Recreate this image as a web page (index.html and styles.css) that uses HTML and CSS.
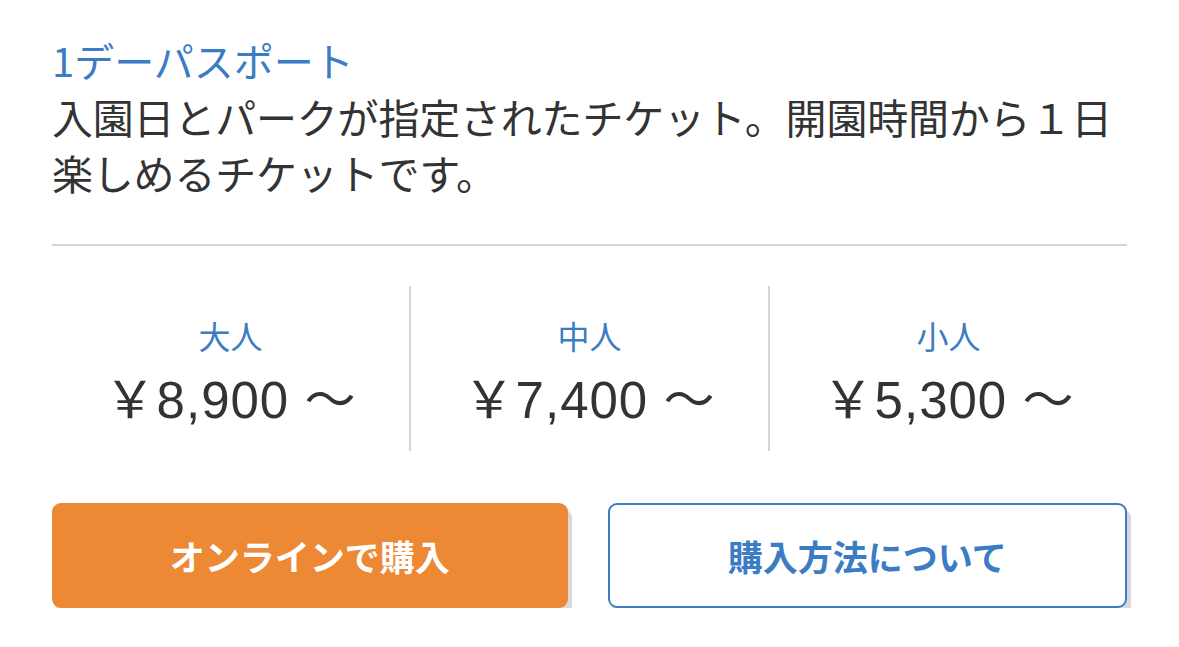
FILE: index.html
```html
<!DOCTYPE html>
<html lang="ja">
<head>
  <meta charset="UTF-8">
  <title>1デーパスポート</title>
  <link rel="stylesheet" href="styles.css">
</head>
<body>
  <div class="ticket">
    <h2 class="ticket-name">1デーパスポート</h2>
    <p class="ticket-desc">入園日とパークが指定されたチケット。開園時間から１日<br>楽しめるチケットです。</p>

    <div class="prices">
      <div class="price-col">
        <div class="age">大人</div>
        <div class="amount">￥8,900 ～</div>
      </div>
      <div class="price-col">
        <div class="age">中人</div>
        <div class="amount">￥7,400 ～</div>
      </div>
      <div class="price-col">
        <div class="age">小人</div>
        <div class="amount">￥5,300 ～</div>
      </div>
    </div>

    <div class="buttons">
      <a href="#" class="btn btn-buy">オンラインで購入</a>
      <a href="#" class="btn btn-info">購入方法について</a>
    </div>
  </div>
</body>
</html>
```

FILE: styles.css
```css
body {
  margin: 0;
  background: #fff;
  font-family: "Noto Sans CJK JP", "Noto Sans", sans-serif;
  color: #333;
}
.ticket {
  padding: 34px 52px 0 52px;
}
.ticket-name {
  margin: 0;
  font-size: 40px;
  font-weight: normal;
  color: #3b7cc4;
  line-height: 52px;
}
.ticket-desc {
  margin: 2px -52px 0 0;
  font-size: 41px;
  letter-spacing: -0.2px;
  line-height: 56px;
}
.prices {
  display: flex;
  border-top: 2px solid #d4d4d4;
  margin-top: 44px;
  padding: 40px 0 52px 0;
}
.price-col {
  flex: 1;
  text-align: center;
  border-left: 2px solid #d4d4d4;
  padding: 28px 0 18px 0;
}
.price-col:first-child {
  border-left: none;
}
.age {
  font-size: 32px;
  color: #3b7cc4;
  line-height: 42px;
}
.amount {
  font-family: "Liberation Sans", "Noto Sans CJK JP", sans-serif;
  font-size: 51px;
  line-height: 64px;
  letter-spacing: 1px;
  margin-top: 13px;
}
.buttons {
  display: flex;
  gap: 40px;
}
.btn {
  flex: 1;
  height: 105px;
  display: flex;
  align-items: center;
  justify-content: center;
  border-radius: 9px;
  font-size: 35px;
  font-weight: bold;
  text-decoration: none;
  box-sizing: border-box;
  box-shadow: 4px 6px 0 #d9d9d9;
}
.btn-buy {
  background: #ed8834;
  color: #fff;
}
.btn-info {
  background: #fff;
  color: #3b7cc4;
  border: 2px solid #3b7cc4;
}
```
